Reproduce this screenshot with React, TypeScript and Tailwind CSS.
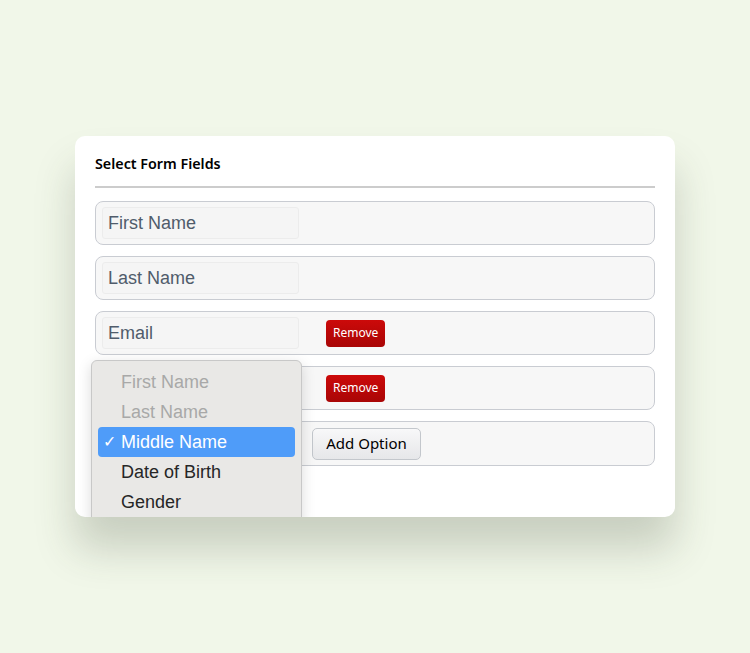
const FIELDS = [
  { label: "First Name", action: null },
  { label: "Last Name", action: null },
  { label: "Email", action: "remove" },
];

const OPTIONS = [
  { label: "First Name", disabled: true },
  { label: "Last Name", disabled: true },
  { label: "Middle Name", selected: true },
  { label: "Date of Birth" },
  { label: "Gender" },
];

function RemoveButton() {
  return (
    <button className="ml-[27px] h-[27px] rounded-[4px] bg-gradient-to-b from-[#cc0a0a] to-[#a90606] px-[7px] font-['Noto_Sans',sans-serif] text-[12px] leading-none text-white">
      Remove
    </button>
  );
}

function FieldInput({ value }: { value: string }) {
  return (
    <div className="flex h-[32px] w-[197px] items-center rounded-[3px] border border-[#ececec] bg-[#f5f5f5] px-[5px] pt-[1px] font-['Liberation_Sans',sans-serif] text-[18px] text-[#505c6b]">
      {value}
    </div>
  );
}

export default function App() {
  return (
    <div className="min-h-[653px] bg-[#f1f7e9] pt-[136px]">
      <div className="relative mx-auto h-[381px] w-[600px] overflow-hidden rounded-[10px] bg-white px-[20px] pt-[18px] shadow-[0_32px_40px_rgba(60,70,50,0.22)]">
        <h2 className="font-['Noto_Sans',sans-serif] text-[14.3px] font-semibold leading-[20px] text-black">
          Select Form Fields
        </h2>
        <div className="mt-[12px] h-[2px] bg-[#cccccc]" />
        <div className="mt-[13px] flex flex-col gap-[11px]">
          {FIELDS.map((f) => (
            <div
              key={f.label}
              className="flex h-[44px] items-center rounded-[8px] border border-[#c9ccd2] bg-[#f7f7f7] px-[6px]"
            >
              <FieldInput value={f.label} />
              {f.action === "remove" && <RemoveButton />}
            </div>
          ))}
          <div className="flex h-[44px] items-center rounded-[8px] border border-[#c9ccd2] bg-[#f7f7f7] px-[6px]">
            <FieldInput value="" />
            <RemoveButton />
          </div>
          <div className="flex h-[45px] items-center rounded-[8px] border border-[#c9ccd2] bg-[#f7f7f7] px-[6px]">
            <FieldInput value="" />
            <button className="ml-[13px] h-[32px] w-[109px] rounded-[5px] border border-[#c3c7cc] bg-gradient-to-b from-[#f8f8f9] to-[#e6e7e9] font-['Noto_Sans',sans-serif] text-[15px] text-black">
              Add Option
            </button>
          </div>
        </div>

        {/* open select menu */}
        <div className="absolute left-[16px] top-[224px] w-[211px] rounded-[6px] border border-[#c8c8c8] bg-[#e9e8e6] px-[6px] pt-[6px] pb-[6px] shadow-[0_4px_14px_rgba(0,0,0,0.15)]">
          {OPTIONS.map((o) => (
            <div
              key={o.label}
              className={
                "relative flex h-[30px] items-center rounded-[4px] pl-[23px] font-['Liberation_Sans',sans-serif] text-[18px] " +
                (o.selected
                  ? "bg-[#4f9cf9] text-white"
                  : o.disabled
                    ? "text-[#a8a8a8]"
                    : "text-[#262626]")
              }
            >
              {o.selected && <span className="absolute left-[5px] text-[16px]">✓</span>}
              {o.label}
            </div>
          ))}
        </div>
      </div>
    </div>
  );
}
